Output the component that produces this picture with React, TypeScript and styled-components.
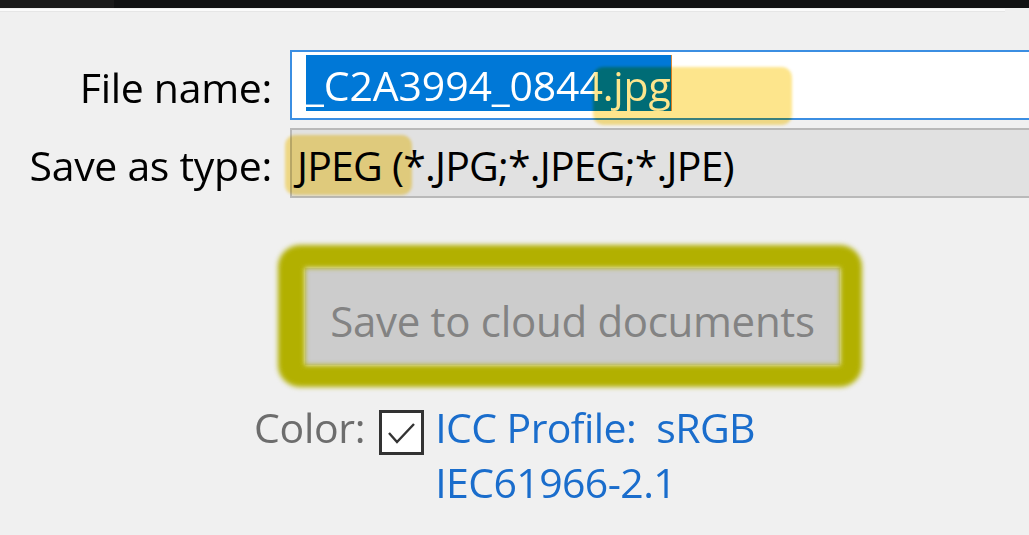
import React from "react";
import styled, { createGlobalStyle } from "styled-components";

const GlobalStyle = createGlobalStyle`
  html, body {
    margin: 0;
    padding: 0;
    background: #f0f0f0;
    overflow: hidden;
  }
  body {
    font-family: "Open Sans", "Noto Sans", "Liberation Sans", sans-serif;
    width: 1029px;
    height: 535px;
  }
`;

const Page = styled.div`
  width: 1029px;
  height: 535px;
  background: #f0f0f0;
  display: flex;
  flex-direction: column;
  overflow: hidden;
`;

const TopBar = styled.div`
  height: 8px;
  display: flex;
`;

const TopSeg = styled.div<{ $w?: number; $bg: string }>`
  background: ${(p) => p.$bg};
  ${(p) => (p.$w ? `width: ${p.$w}px;` : "flex: 1;")}
`;

const TopEdge = styled.div`
  height: 2px;
  margin-top: 1px;
  margin-right: 24px;
  background: #fbfbfb;
  box-shadow: 0 1px 0 #e6e6e6;
`;

const Form = styled.div`
  display: grid;
  grid-template-columns: 272px 1fr;
  grid-auto-rows: 70px;
  column-gap: 18px;
  row-gap: 8px;
  margin-top: 39px;
`;

const Label = styled.div`
  align-self: center;
  text-align: right;
  font-size: 41px;
  letter-spacing: -0.3px;
  color: #000;
  line-height: 1;
  padding-top: 5px;
`;

const FieldBase = styled.div`
  position: relative;
  display: flex;
  align-items: center;
  font-size: 41px;
  margin-right: -10px;
`;

const TextInput = styled(FieldBase)`
  background: #fff;
  border: 2px solid #3b8ee2;
  border-right: none;
  padding-left: 14px;
  letter-spacing: -0.15px;
`;

const Combo = styled(FieldBase)`
  background: #e1e1e1;
  border: 2px solid #b9b9b9;
  border-right: none;
  padding-left: 5px;
  padding-top: 4px;
  color: #000;
  letter-spacing: -0.8px;
`;

const Selected = styled.span`
  background: #0078d7;
  color: #fff;
  height: 56px;
  line-height: 60px;
  border-right: 1px solid #d98a3a;
  margin-top: 4px;
  margin-bottom: 8px;
`;

const Marker = styled.span<{ $left: number; $top: number; $w: number; $h: number }>`
  position: absolute;
  left: ${(p) => p.$left}px;
  top: ${(p) => p.$top}px;
  width: ${(p) => p.$w}px;
  height: ${(p) => p.$h}px;
  background: #fde58c;
  mix-blend-mode: multiply;
  border-radius: 10px;
  filter: blur(1.5px);
  pointer-events: none;
`;

const ButtonRow = styled.div`
  display: flex;
  padding-left: 278px;
  margin-top: 47px;
`;

const Outline = styled.div`
  position: relative;
  padding: 23px 22px 22px 27px;

  &::before {
    content: "";
    position: absolute;
    inset: 0;
    border-style: solid;
    border-color: #b2b000;
    border-width: 23px 22px 22px 27px;
    border-radius: 22px;
    filter: blur(2.5px);
  }
`;

const CloudButton = styled.button`
  width: 535px;
  height: 97px;
  border: none;
  background: #cccccc;
  color: #838383;
  font-family: inherit;
  font-size: 42px;
  letter-spacing: -0.3px;
  padding: 8px 0 0;
  display: flex;
  align-items: center;
  justify-content: center;
`;

const ColorRow = styled.div`
  display: flex;
  align-items: flex-start;
  padding-left: 254px;
  margin-top: 20px;
`;

const ColorLabel = styled.span`
  font-size: 41px;
  letter-spacing: -0.3px;
  line-height: 55px;
  color: #6d6d6d;
  margin-top: -7px;
`;

const Check = styled.div`
  width: 45px;
  height: 45px;
  box-sizing: border-box;
  border: 3px solid #333;
  background: #fff;
  margin-left: 14px;
  margin-top: 3px;
  display: flex;
  align-items: center;
  justify-content: center;
`;

const Profile = styled.div`
  margin-left: 11px;
  margin-top: -7px;
  font-size: 41px;
  letter-spacing: -0.6px;
  line-height: 55px;
  color: #1a6dcc;
  white-space: pre;
`;

export default function App() {
  return (
    <Page>
      <GlobalStyle />
      <TopBar>
        <TopSeg $w={114} $bg="#1b1b1b" />
        <TopSeg $bg="#111213" />
      </TopBar>
      <TopEdge />
      <Form>
        <Label>File name:</Label>
        <TextInput>
          <Selected>_C2A3994_0844.jpg</Selected>
          <Marker $left={301} $top={15} $w={199} $h={58} />
        </TextInput>
        <Label>Save as type:</Label>
        <Combo>
          JPEG (*.JPG;*.JPEG;*.JPE)
          <Marker $left={-7} $top={5} $w={127} $h={60} />
        </Combo>
      </Form>
      <ButtonRow>
        <Outline>
          <CloudButton>Save to cloud documents</CloudButton>
        </Outline>
      </ButtonRow>
      <ColorRow>
        <ColorLabel>Color:</ColorLabel>
        <Check>
          <svg width="33" height="33" viewBox="0 0 33 33">
            <path d="M4 17 L12 26 L29 8" fill="none" stroke="#333" strokeWidth="2.4" />
          </svg>
        </Check>
        <Profile>
          {"ICC Profile:  sRGB\nIEC61966-2.1"}
        </Profile>
      </ColorRow>
    </Page>
  );
}
